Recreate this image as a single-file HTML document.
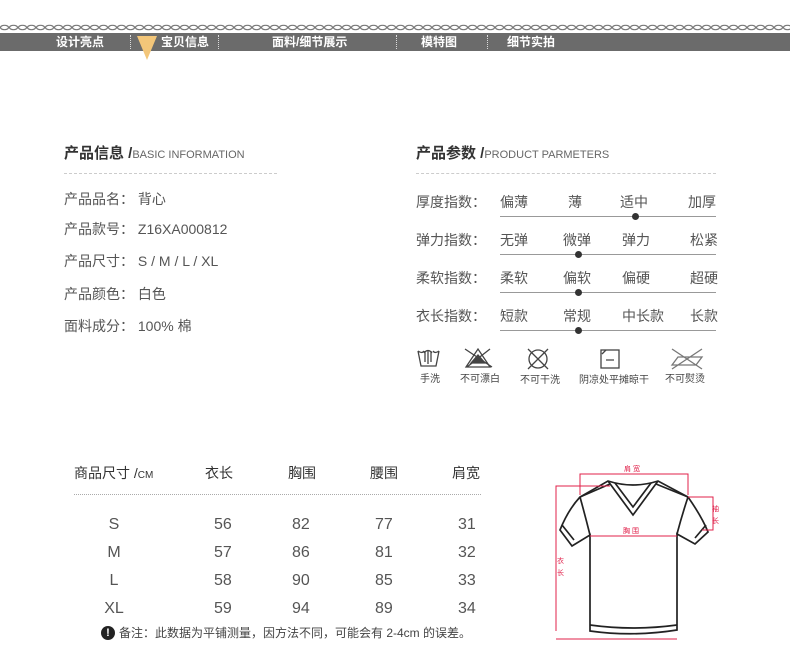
<!DOCTYPE html>
<html><head><meta charset="utf-8"><style>
body{margin:0;width:790px;height:655px;background:#fff;position:relative;overflow:hidden;font-family:"Liberation Sans","Noto Sans CJK SC",sans-serif;color:#555}
.a{position:absolute;white-space:nowrap;line-height:1}
.nav{position:absolute;left:0;top:33px;width:790px;height:18px;background:#6b6b6b}
.nt{position:absolute;top:36px;color:#fff;font-size:12px;font-weight:bold;line-height:12px}
.sep{position:absolute;top:35px;height:14px;border-left:1px dotted #ddd}
.t{font-size:15px;font-weight:bold;color:#333}
.t small{font-size:11px;font-weight:normal;color:#666}
.r{font-size:14px;color:#555}
.ln{position:absolute;height:1px;background:#999}
.dot{position:absolute;width:7px;height:7px;border-radius:50%;background:#333}
.ic{font-size:10px;color:#444}
</style></head><body>
<svg class="a" style="left:0;top:24px" width="790" height="8"><defs><pattern id="c" width="9" height="7" patternUnits="userSpaceOnUse"><ellipse cx="4.5" cy="3.5" rx="4" ry="2.2" fill="none" stroke="#777" stroke-width="1.2"/></pattern></defs><rect width="790" height="7" fill="url(#c)"/></svg>
<div class="nav"></div>
<div class="nt" style="left:56px">设计亮点</div>
<div class="sep" style="left:130px"></div>
<svg class="a" style="left:137px;top:35px" width="21" height="26"><polygon points="0,1 20,1 10,25" fill="#f3c679"/></svg>
<div class="nt" style="left:161px">宝贝信息</div>
<div class="sep" style="left:218px"></div>
<div class="nt" style="left:272px">面料/细节展示</div>
<div class="sep" style="left:396px"></div>
<div class="nt" style="left:421px">模特图</div>
<div class="sep" style="left:487px"></div>
<div class="nt" style="left:507px">细节实拍</div>

<div class="a t" style="left:64px;top:146px">产品信息 /<small>BASIC INFORMATION</small></div>
<div class="a" style="left:64px;top:173px;width:213px;border-top:1px dashed #ccc"></div>
<div class="a r" style="left:64px;top:192px">产品品名： 背心</div>
<div class="a r" style="left:64px;top:222px">产品款号： Z16XA000812</div>
<div class="a r" style="left:64px;top:254px">产品尺寸： S / M / L / XL</div>
<div class="a r" style="left:64px;top:287px">产品颜色： 白色</div>
<div class="a r" style="left:64px;top:319px">面料成分： 100% 棉</div>

<div class="a t" style="left:416px;top:146px">产品参数 /<small>PRODUCT PARMETERS</small></div>
<div class="a" style="left:416px;top:173px;width:300px;border-top:1px dashed #ccc"></div>

<div class="a r" style="left:416px;top:195px">厚度指数：</div>
<div class="a r" style="left:500px;top:195px">偏薄</div><div class="a r" style="left:568px;top:195px">薄</div><div class="a r" style="left:620px;top:195px">适中</div><div class="a r" style="left:688px;top:195px">加厚</div>
<div class="ln" style="left:500px;top:216px;width:216px"></div><div class="dot" style="left:632px;top:213px"></div>

<div class="a r" style="left:416px;top:233px">弹力指数：</div>
<div class="a r" style="left:500px;top:233px">无弹</div><div class="a r" style="left:563px;top:233px">微弹</div><div class="a r" style="left:622px;top:233px">弹力</div><div class="a r" style="left:690px;top:233px">松紧</div>
<div class="ln" style="left:500px;top:254px;width:216px"></div><div class="dot" style="left:575px;top:251px"></div>

<div class="a r" style="left:416px;top:271px">柔软指数：</div>
<div class="a r" style="left:500px;top:271px">柔软</div><div class="a r" style="left:563px;top:271px">偏软</div><div class="a r" style="left:622px;top:271px">偏硬</div><div class="a r" style="left:690px;top:271px">超硬</div>
<div class="ln" style="left:500px;top:292px;width:216px"></div><div class="dot" style="left:575px;top:289px"></div>

<div class="a r" style="left:416px;top:309px">衣长指数：</div>
<div class="a r" style="left:500px;top:309px">短款</div><div class="a r" style="left:563px;top:309px">常规</div><div class="a r" style="left:622px;top:309px">中长款</div><div class="a r" style="left:690px;top:309px">长款</div>
<div class="ln" style="left:500px;top:330px;width:216px"></div><div class="dot" style="left:575px;top:327px"></div>

<svg class="a" style="left:410px;top:345px" width="320" height="30" fill="none" stroke="#444" stroke-width="1.3">
<path d="M8 6 L11 21 H26 L29 6 M8 6 Q12 9 14 6 M23 6 Q25 9 29 6 M15 6 V17 M18 5 V19 M21 6 V17 M14 8 Q18 3 22 8"/>
<path d="M56 22 L68 4 L80 22 Z M55 4 L82 22 M80 4 L57 22"/><path d="M61 18 L68 10 L75 18 Z" fill="#444"/>
<circle cx="128" cy="14" r="9"/><path d="M118 4 L138 24 M138 4 L118 24"/>
<rect x="191" y="5" width="18" height="18"/><path d="M192 9 L196 5 M196 15 H204"/>
<path d="M262 20 L268 12 H292 L286 20 Z M262 4 L292 24 M292 4 L262 24" stroke="#777"/>
</svg>
<div class="a ic" style="left:420px;top:375px">手洗</div>
<div class="a ic" style="left:460px;top:375px">不可漂白</div>
<div class="a ic" style="left:520px;top:376px">不可干洗</div>
<div class="a ic" style="left:579px;top:376px">阴凉处平摊晾干</div>
<div class="a ic" style="left:665px;top:375px">不可熨烫</div>

<div class="a" style="left:74px;top:466px;font-size:14px;color:#333">商品尺寸 /<span style="font-size:10px">CM</span></div>
<div class="a" style="left:205px;top:466px;font-size:14px;color:#333">衣长</div>
<div class="a" style="left:288px;top:466px;font-size:14px;color:#333">胸围</div>
<div class="a" style="left:370px;top:466px;font-size:14px;color:#333">腰围</div>
<div class="a" style="left:452px;top:466px;font-size:14px;color:#333">肩宽</div>
<div class="a" style="left:74px;top:494px;width:407px;border-top:1px dotted #aaa"></div>
<div class="a" style="left:0;top:511px;font-size:16px;color:#555;line-height:28px">
<div style="position:absolute;left:104px;width:20px;text-align:center">S<br>M<br>L<br>XL</div>
<div style="position:absolute;left:214px">56<br>57<br>58<br>59</div>
<div style="position:absolute;left:292px">82<br>86<br>90<br>94</div>
<div style="position:absolute;left:375px">77<br>81<br>85<br>89</div>
<div style="position:absolute;left:458px">31<br>32<br>33<br>34</div>
</div>
<div class="a" style="left:101px;top:626px;width:14px;height:14px;border-radius:50%;background:#222;color:#fff;font-size:11px;font-weight:bold;text-align:center;line-height:14px">!</div>
<div class="a" style="left:119px;top:627px;font-size:12px;color:#444">备注：此数据为平铺测量，因方法不同，可能会有 2-4cm 的误差。</div>

<svg class="a" style="left:540px;top:455px" width="190" height="195">
<g fill="none" stroke="#222" stroke-width="1.7">
<path d="M68 26 Q93 34 118 26 L148 42 Q162 62 168 77 L155 89 L137 79 L137 175 Q93 182 50 176 L50 80 L32 91 L20 75 Q28 55 40 42 Z"/>
<path d="M68 26 L93 60 L118 26 M75 28 L93 52 L111 28"/>
<path d="M40 42 Q45 60 50 80 M148 42 Q142 60 137 79"/>
<path d="M40 42 L70 29 M148 42 L116 29"/>
<path d="M22 70 L34 85 M166 70 L155 83"/>
<path d="M50 170 Q93 176 137 170"/>
</g>
<g fill="none" stroke="#e0204a" stroke-width="1">
<path d="M40 40 V19 H148 V40"/><path d="M16 176 V31 H70 M16 184 H137"/><path d="M148 42 H173 V75 H162"/><path d="M50 81 H137"/>
</g>
<g fill="#e0204a" font-size="7"><text x="84" y="16">肩 宽</text><text x="83" y="78">胸 围</text><text x="17" y="108">衣</text><text x="17" y="120">长</text><text x="172" y="56">袖</text><text x="172" y="68">长</text></g>
</svg>
</body></html>
